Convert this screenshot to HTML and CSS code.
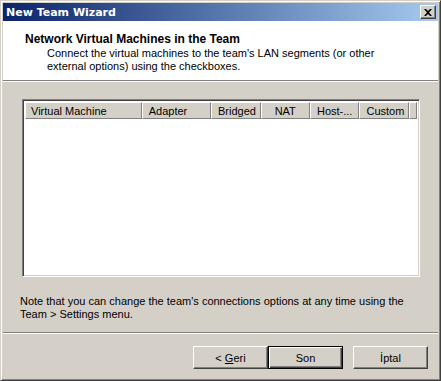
FILE: index.html
```html
<!DOCTYPE html>
<html>
<head>
<meta charset="utf-8">
<link rel="stylesheet" href="styles.css">
</head>
<body>
<div class="window">
  <div class="titlebar">
    <span class="title">New Team Wizard</span>
    <span class="close"><svg width="8" height="7" viewBox="0 0 8 7"><path d="M0 0h2l2 2 2-2h2L5 3.5 8 7H6L4 5 2 7H0l3-3.5z" fill="#000"/></svg></span>
  </div>
  <div class="header">
    <div class="h-title">Network Virtual Machines in the Team</div>
    <div class="h-desc">Connect the virtual machines to the team's LAN segments (or other external options) using the checkboxes.</div>
  </div>
  <div class="content">
    <div class="list">
      <div class="cols">
        <div class="col c1">Virtual Machine</div>
        <div class="col c2">Adapter</div>
        <div class="col c3">Bridged</div>
        <div class="col c4">NAT</div>
        <div class="col c5">Host-...</div>
        <div class="col c6">Custom</div>
        <div class="col cfill"></div>
      </div>
    </div>
    <p class="note">Note that you can change the team's connections options at any time using the Team &gt; Settings menu.</p>
  </div>
  <div class="footer">
    <button class="btn"><span>&lt; <u>G</u>eri</span></button>
    <button class="btn default"><span>Son</span></button>
    <button class="btn gap"><span>İptal</span></button>
  </div>
</div>
</body>
</html>
```
FILE: styles.css
```css
html, body {
  margin: 0;
  padding: 0;
  background: #d4d0c8;
}
.window {
  width: 441px;
  height: 381px;
  box-sizing: border-box;
  border: 1px solid;
  border-color: #d4d0c8 #404040 #404040 #d4d0c8;
  box-shadow: inset 1px 1px #ffffff, inset -1px -1px #808080;
  padding: 2px;
  background: #d4d0c8;
  display: flex;
  flex-direction: column;
  font-family: "Liberation Sans", Arial, sans-serif;
  font-size: 11px;
  color: #000;
}
.titlebar {
  height: 18px;
  flex: none;
  background: linear-gradient(to right, #0a246a, #a6caf0);
  display: flex;
  align-items: center;
  justify-content: space-between;
  padding: 0 2px 0 3px;
}
.title {
  color: #fff;
  font-family: "DejaVu Sans", sans-serif;
  font-weight: bold;
  font-size: 11px;
}
.close {
  width: 16px;
  height: 14px;
  box-sizing: border-box;
  background: #d4d0c8;
  border: 1px solid;
  border-color: #ffffff #404040 #404040 #ffffff;
  box-shadow: inset -1px -1px #808080;
  display: flex;
  align-items: center;
  justify-content: center;
}
.header {
  flex: none;
  height: 60px;
  background: #fff;
  border-bottom: 1px solid #808080;
  box-shadow: 0 1px #ffffff;
  padding: 12px 0 0 22px;
  box-sizing: border-box;
}
.h-title {
  font-weight: bold;
  font-size: 12px;
  line-height: 13px;
}
.h-desc {
  padding-left: 22px;
  padding-top: 1px;
  line-height: 13px;
  width: 340px;
}
.content {
  flex: 1;
  padding: 18px 0 0 19px;
  border-bottom: 1px solid #808080;
  box-shadow: 0 1px #ffffff;
  margin-bottom: 1px;
}
.list {
  width: 398px;
  height: 178px;
  box-sizing: border-box;
  background: #fff;
  border: 1px solid;
  border-color: #808080 #ffffff #ffffff #808080;
  box-shadow: inset 1px 1px #404040, inset -1px -1px #d4d0c8;
  padding: 2px 2px 0 2px;
}
.cols {
  display: flex;
  height: 17px;
}
.col {
  box-sizing: border-box;
  background: #d4d0c8;
  border: 1px solid;
  border-color: #ffffff #808080 #808080 #ffffff;
  display: flex;
  align-items: center;
  justify-content: flex-start;
  padding-left: 6px;
  white-space: nowrap;
  overflow: hidden;
  height: 17px;
}
.c1 { width: 118px; padding-left: 5px; }
.c2 { width: 70px; }
.c3 { width: 50px; }
.c4 { width: 50px; justify-content: center; padding-left: 0; }
.c5 { width: 50px; }
.c6 { width: 50px; }
.cfill { flex: 1; }
.note {
  margin: 18px 0 0 -2px;
  line-height: 13px;
  width: 400px;
}
.footer {
  flex: none;
  height: 44px;
  display: flex;
  justify-content: flex-end;
  align-items: flex-start;
  padding: 12px 10px 0 0;
  box-sizing: border-box;
}
.btn {
  width: 75px;
  height: 23px;
  box-sizing: border-box;
  background: #d4d0c8;
  border: 1px solid;
  border-color: #ffffff #404040 #404040 #ffffff;
  box-shadow: inset -1px -1px #808080;
  font-family: inherit;
  font-size: 11px;
  padding: 0;
  color: #000;
}
.btn.default {
  border: 1px solid #000;
  box-shadow: inset 1px 1px #ffffff, inset -1px -1px #404040, inset -2px -2px #808080;
}
.btn.gap {
  margin-left: 10px;
}
```
